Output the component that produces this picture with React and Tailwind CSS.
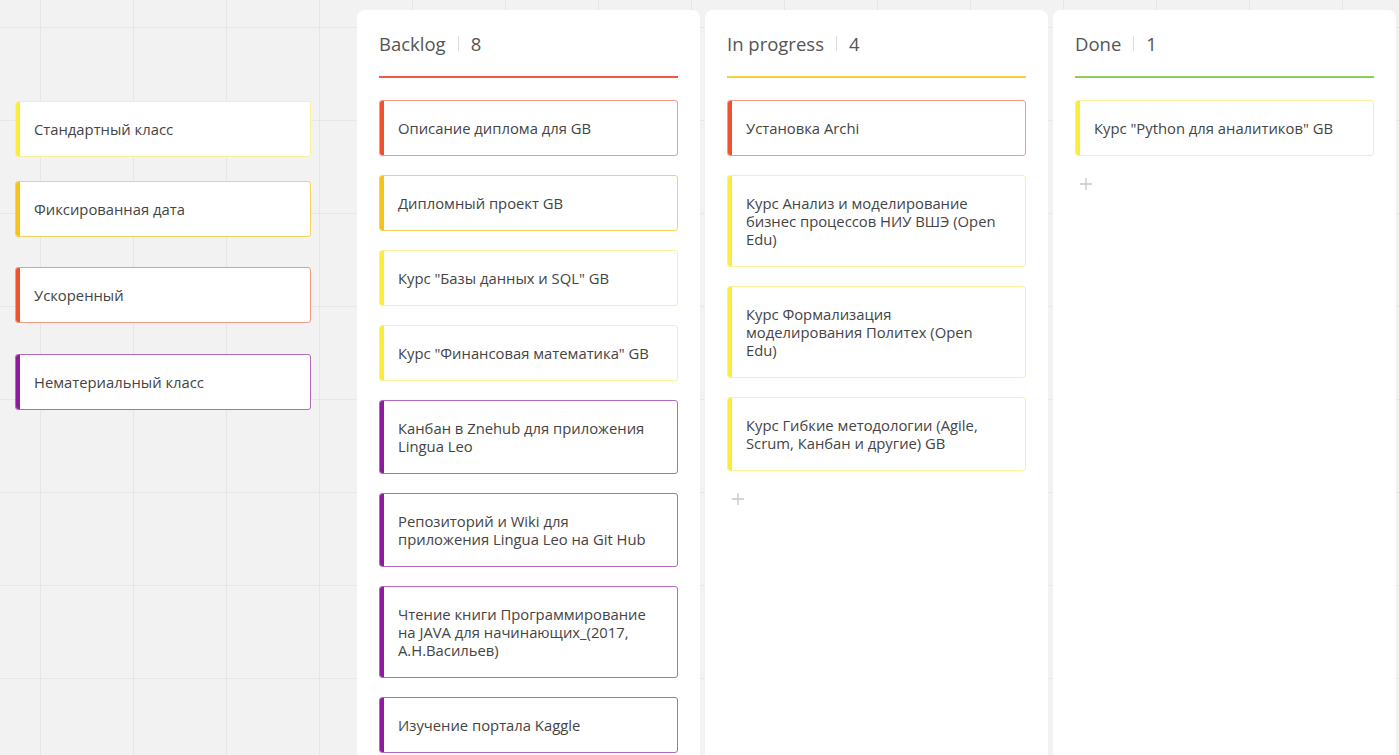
import React from 'react';

const TONES = {
  red: { bar: 'bg-[#f0512e]', border: 'border-[#f19a85]' },
  gold: { bar: 'bg-[#f8c21c]', border: 'border-[#f6d45e]' },
  yellow: { bar: 'bg-[#fbeb3c]', border: 'border-[#f8f19a]' },
  purple: { bar: 'bg-[#8e1a9e]', border: 'border-[#b06abf]' },
};

const palette = [
  { text: 'Стандартный класс', tone: 'yellow', mt: 'mt-0' },
  { text: 'Фиксированная дата', tone: 'gold', mt: 'mt-[24px]' },
  { text: 'Ускоренный', tone: 'red', mt: 'mt-[30px]' },
  { text: 'Нематериальный класс', tone: 'purple', mt: 'mt-[31px]' },
];

const columns = [
  {
    title: 'Backlog',
    count: 8,
    line: 'bg-[#ee5a3f]',
    cards: [
      { text: 'Описание диплома для GB', tone: 'red' },
      { text: 'Дипломный проект GB', tone: 'gold' },
      { text: 'Курс "Базы данных и SQL" GB', tone: 'yellow' },
      { text: 'Курс "Финансовая математика" GB', tone: 'yellow' },
      { text: 'Канбан в Znehub для приложения Lingua Leo', tone: 'purple' },
      { text: 'Репозиторий и Wiki для приложения Lingua Leo на Git Hub', tone: 'purple' },
      { text: 'Чтение книги Программирование на JAVA для начинающих_(2017, А.Н.Васильев)', tone: 'purple' },
      { text: 'Изучение портала Kaggle', tone: 'purple' },
    ],
    add: false,
  },
  {
    title: 'In progress',
    count: 4,
    line: 'bg-[#f7cf3a]',
    cards: [
      { text: 'Установка Archi', tone: 'red' },
      { text: 'Курс Анализ и моделирование бизнес процессов НИУ ВШЭ (Open Edu)', tone: 'yellow' },
      { text: 'Курс Формализация моделирования Политех (Open Edu)', tone: 'yellow' },
      { text: 'Курс Гибкие методологии (Agile, Scrum, Канбан и другие) GB', tone: 'yellow' },
    ],
    add: true,
  },
  {
    title: 'Done',
    count: 1,
    line: 'bg-[#8dcf57]',
    cards: [{ text: 'Курс "Python для аналитиков" GB', tone: 'yellow' }],
    add: true,
  },
];

const Card = ({ text, tone, className = '' }) => {
  const t = TONES[tone];
  return (
    <div className={`flex rounded-[3px] border ${t.border} bg-white overflow-hidden ${className}`}>
      <div className={`w-[4px] shrink-0 ${t.bar}`}></div>
      <div className="flex-1 pl-[14px] pr-[19px] py-[18px] text-[14.8px] leading-[18px] text-[#444]">
        {text}
      </div>
    </div>
  );
};

const Column = ({ col }) => (
  <div className="w-[343px] shrink-0 h-[760px] bg-white rounded-t-[8px] px-[22px]">
    <div className="flex items-center h-[66px] pt-[1px] text-[18.5px] text-[#555]">
      <span>{col.title}</span>
      <span className="mx-[12px] h-[15px] w-px bg-[#ddd]"></span>
      <span>{col.count}</span>
    </div>
    <div className={`h-[2px] ${col.line}`}></div>
    <div className="flex flex-col gap-[19px] pt-[22px]">
      {col.cards.map((c, i) => (
        <Card key={i} text={c.text} tone={c.tone} />
      ))}
    </div>
    {col.add && (
      <div className="pl-[5px] pt-[22px]">
        <svg width="12" height="12" viewBox="0 0 12 12">
          <path d="M6 0v12M0 6h12" stroke="#c8c8c8" strokeWidth="1.3" />
        </svg>
      </div>
    )}
  </div>
);

export default function App() {
  return (
    <div
      className="h-[755px] w-[1399px] overflow-hidden bg-[#f2f2f2] bg-[linear-gradient(to_right,#e6e6e6_1px,transparent_1px),linear-gradient(to_bottom,#e6e6e6_1px,transparent_1px)] [background-size:93px_93px] [background-position:40px_27px] flex"
      style={{ fontFamily: '"Open Sans", "Noto Sans", sans-serif' }}
    >
      <div className="w-[357px] shrink-0 pl-[15px] pt-[101px]">
        <div className="w-[296px] flex flex-col">
          {palette.map((p, i) => (
            <Card key={i} text={p.text} tone={p.tone} className={p.mt} />
          ))}
        </div>
      </div>
      <div className="flex gap-[5px] pt-[10px]">
        {columns.map((col) => (
          <Column key={col.title} col={col} />
        ))}
      </div>
    </div>
  );
}
